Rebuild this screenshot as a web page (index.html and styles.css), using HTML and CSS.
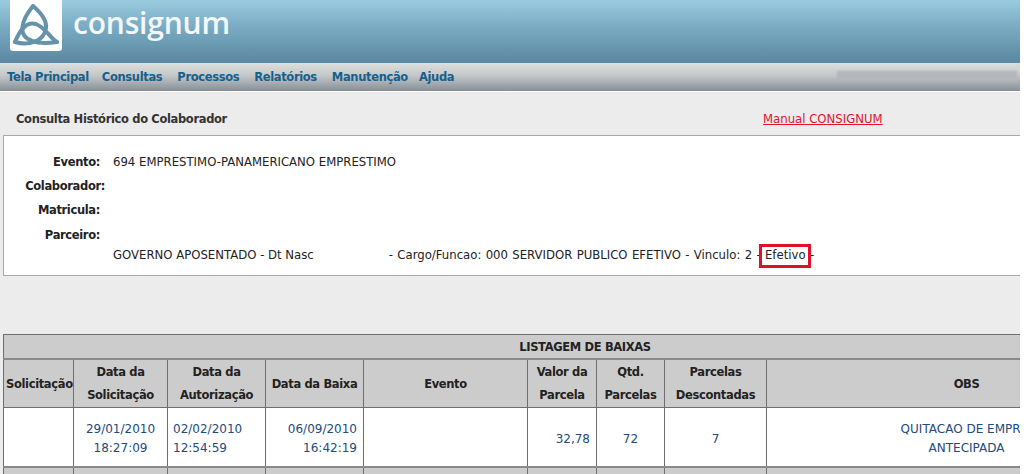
FILE: index.html
```html
<!DOCTYPE html>
<html lang="pt-BR">

<head>
    <meta charset="UTF-8">
    <title>Consignum</title>
    <link rel="stylesheet" href="styles.css">
</head>

<body>
    <div id="page">
        <div id="header">
            <div class="logo">
                <svg width="52" height="51" viewBox="0 0 52 51">
                    <g fill="none" stroke="#6593a9" stroke-width="4" stroke-linecap="round">
                        <path d="M23 6C10 22 8 36 22 41C30 44 40 43 47 42" />
                        <path d="M5 42C18 46 34 42 36 28C37 20 30 12 23 6" />
                        <path d="M47 42C40 38 36 28 26 24C16 21 9 32 5 42" />
                    </g>
                </svg>
            </div>
            <div class="brand">consignum</div>
        </div>
        <div id="nav">
            <a class="first" href="#">Tela Principal</a>
            <a href="#">Consultas</a>
            <a href="#">Processos</a>
            <a href="#">Relatórios</a>
            <a class="tight" href="#">Manutenção</a>
            <a href="#">Ajuda</a>
            <div class="smudge"></div>
        </div>
        <div id="main">
            <div class="titlebar">
                <h1>Consulta Histórico do Colaborador</h1>
                <a class="manual" href="#">Manual CONSIGNUM</a>
            </div>
            <div class="card">
                <div class="field"><b>Evento:</b><span>694 EMPRESTIMO-PANAMERICANO EMPRESTIMO</span></div>
                <div class="field"><b class="wide">Colaborador:</b><span></span></div>
                <div class="field"><b>Matricula:</b><span></span></div>
                <div class="field"><b>Parceiro:</b><span></span></div>
                <div class="field extra"><b></b><span>GOVERNO APOSENTADO - Dt Nasc<i class="blank"></i><span class="tail">- Cargo/Funcao: 000 SERVIDOR PUBLICO EFETIVO - Vinculo: 2 - <span class="mark">Efetivo</span> -</span></span></div>
            </div>
            <table class="list">
                <colgroup>
                    <col class="c1">
                    <col class="c2">
                    <col class="c3">
                    <col class="c4">
                    <col class="c5">
                    <col class="c6">
                    <col class="c7">
                    <col class="c8">
                    <col class="c9">
                </colgroup>
                <tr class="title">
                    <th colspan="9">LISTAGEM DE BAIXAS</th>
                </tr>
                <tr class="heads">
                    <th>Solicitação</th>
                    <th>Data da<br>Solicitação</th>
                    <th>Data da<br>Autorização</th>
                    <th>Data da Baixa</th>
                    <th>Evento</th>
                    <th>Valor da<br>Parcela</th>
                    <th>Qtd.<br>Parcelas</th>
                    <th>Parcelas<br>Descontadas</th>
                    <th>OBS</th>
                </tr>
                <tr class="row">
                    <td></td>
                    <td class="center">29/01/2010<br>18:27:09</td>
                    <td class="left">02/02/2010<br>12:54:59</td>
                    <td class="right">06/09/2010<br>16:42:19</td>
                    <td></td>
                    <td class="right">32,78</td>
                    <td class="center">72</td>
                    <td class="center">7</td>
                    <td class="center"><span class="obs">QUITACAO DE EMPRESTIMO</span><br>ANTECIPADA</td>
                </tr>
                <tr class="row alt">
                    <td></td>
                    <td></td>
                    <td></td>
                    <td></td>
                    <td></td>
                    <td></td>
                    <td></td>
                    <td></td>
                    <td></td>
                </tr>
            </table>
        </div>
    </div>
</body>

</html>
```

FILE: styles.css
```css
html,
body {
    margin: 0;
    height: 100%;
    overflow: hidden;
    background-color: #ffffff;
}

body {
    font-family: "DejaVu Sans", Verdana, sans-serif;
    font-size: 11px;
    color: #222222;
}

#page {
    width: 1020px;
    height: 474px;
    overflow: hidden;
}

#header {
    height: 63px;
    display: flex;
    align-items: flex-start;
    padding-left: 10px;
    background: linear-gradient(#9accde, #7fb0c8 35%, #5a87a1);
}

.logo {
    width: 52px;
    height: 51px;
    background-color: #ffffff;
    border-radius: 0 0 3px 3px;
}

.brand {
    margin: 3px 0 0 11px;
    font-family: "Open Sans", sans-serif;
    font-size: 30px;
    font-weight: 600;
    line-height: 40px;
    letter-spacing: -0.2px;
    color: #f2f7f9;
}

#nav {
    height: 28px;
    display: flex;
    align-items: center;
    padding-left: 7px;
    background: linear-gradient(#dcdfdd, #c4c7c8 45%, #858f96);
}

#nav a {
    margin-right: 15px;
    font-size: 11.5px;
    font-weight: bold;
    letter-spacing: -0.35px;
    color: #14608f;
    text-decoration: none;
}

#nav a.first {
    margin-right: 13px;
}

#nav a.tight {
    margin-right: 11px;
}

.smudge {
    width: 180px;
    height: 8px;
    margin: -5px 3px 0 auto;
    background-color: #b3b6bb;
    filter: blur(1px);
}

#main {
    height: 383px;
    margin-top: 1px;
    background-color: #ececec;
}

.titlebar {
    height: 43px;
    display: flex;
    align-items: center;
    padding: 10px 0 0 16px;
    box-sizing: border-box;
}

h1 {
    width: 747px;
    margin: 0;
    font-size: 11.5px;
    font-weight: bold;
    letter-spacing: -0.35px;
    color: #333333;
}

.manual {
    font-size: 11.7px;
    color: #e4122d;
}

.card {
    height: 141px;
    margin-left: 3px;
    padding-top: 14px;
    box-sizing: border-box;
    background-color: #ffffff;
    border: 1px solid #a9a9a9;
    border-right: 0;
}

.field {
    display: flex;
    height: 24.2px;
    line-height: 24px;
    font-size: 11.7px;
}

.field b {
    flex: none;
    width: 96px;
    margin-right: 13px;
    text-align: right;
    font-size: 11.5px;
    letter-spacing: -0.35px;
    color: #222222;
}

.field .wide {
    width: 101px;
    margin-right: 8px;
}

.field.extra {
    margin-top: -4px;
}

.blank {
    display: inline-block;
    width: 75px;
}

.tail {
    word-spacing: 0.6px;
}

.mark {
    position: relative;
}

.mark::after {
    content: "";
    position: absolute;
    left: -6px;
    right: -5px;
    top: -4px;
    bottom: -6px;
    border: 3px solid #e0102a;
}

.list {
    width: 1163px;
    margin: 58px 0 0 3px;
    table-layout: fixed;
    border-collapse: collapse;
    background-color: #ffffff;
}

.c1 { width: 70px; }
.c2 { width: 94px; }
.c3 { width: 98px; }
.c4 { width: 98px; }
.c5 { width: 164px; }
.c6 { width: 69px; }
.c7 { width: 68px; }
.c8 { width: 102px; }
.c9 { width: 400px; }

.list th,
.list td {
    padding: 0 2px;
    border: 1px solid #6e6e6e;
}

.list th {
    padding-top: 1px;
    background-color: #cccccc;
    color: #222222;
    font-size: 11.5px;
    letter-spacing: -0.35px;
    line-height: 23px;
    white-space: nowrap;
}

.list td {
    padding-top: 4px;
    font-size: 12px;
    line-height: 19px;
}

.title th {
    line-height: 22px;
    border-bottom-width: 2px;
    border-bottom-color: #8a8a8a;
}

.row td {
    height: 54px;
    color: #234a7c;
}

.row.alt td {
    background-color: #cccccc;
    border-top: 2px solid #8a8a8a;
}

.center {
    text-align: center;
}

.list td.left {
    padding-left: 5px;
    text-align: left;
}

.list td.right {
    padding-right: 6px;
    text-align: right;
}

.obs {
    margin-left: 34px;
    white-space: nowrap;
}
```
